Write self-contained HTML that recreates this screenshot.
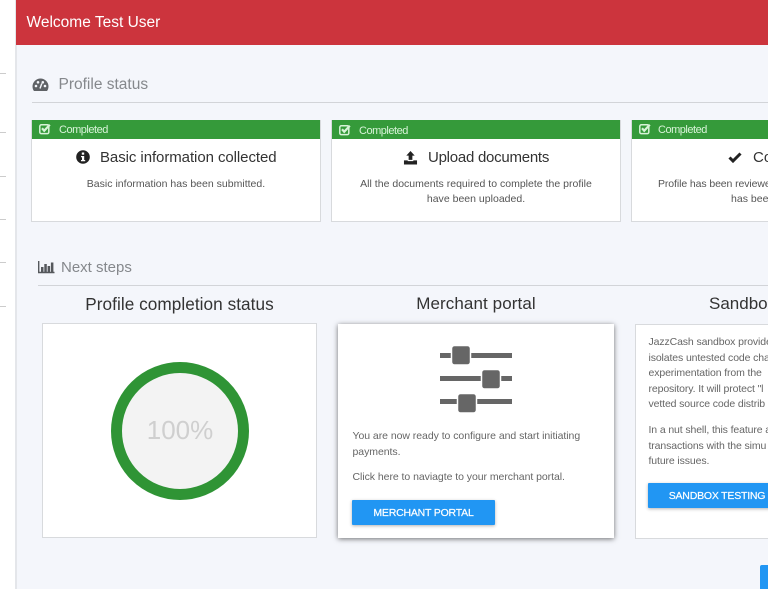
<!DOCTYPE html>
<html><head><meta charset="utf-8"><title>Welcome Test User</title>
<style>
html,body{margin:0;padding:0}
body{width:768px;height:589px;overflow:hidden;position:relative;background:#f4f6fb;font-family:"Liberation Sans",sans-serif}
.a{position:absolute;white-space:nowrap}
.c{text-align:center}
.box{position:absolute;background:#fff;box-sizing:border-box;border:1px solid #d8dadd}
.gr{position:absolute;background:#359a3a;height:19px}
.cmp{position:absolute;color:#d8f3d8;font-size:11px;line-height:19px;white-space:nowrap;letter-spacing:-.48px}
.h{color:#333;font-size:15px;line-height:20px}
.t{color:#555;font-size:10.5px;line-height:15px;letter-spacing:.01px}
.p{color:#666;font-size:10.5px;line-height:15.5px;letter-spacing:-.05px}
.btn{position:absolute;background:#2196f3;color:#fff;font-size:10.5px;text-align:center;border-radius:1px;box-shadow:0 1px 3px rgba(0,0,0,.3);letter-spacing:-.2px;-webkit-text-stroke:.2px #fff}
.sv{stroke:#d8f3d8;fill:none}
</style></head><body>
<div class="a" style="left:0;top:0;width:15px;height:589px;background:#fff"></div>
<div class="a" style="left:15px;top:0;width:2px;height:589px;background:#e4e6ea"></div>
<div class="a" style="left:0;top:73px;width:6px;height:1px;background:#ccc"></div>
<div class="a" style="left:0;top:132px;width:6px;height:1px;background:#ccc"></div>
<div class="a" style="left:0;top:176px;width:6px;height:1px;background:#ccc"></div>
<div class="a" style="left:0;top:219px;width:6px;height:1px;background:#ccc"></div>
<div class="a" style="left:0;top:262px;width:6px;height:1px;background:#ccc"></div>
<div class="a" style="left:0;top:306px;width:6px;height:1px;background:#ccc"></div>

<div class="a" style="left:16px;top:0;width:752px;height:44.5px;background:#cc343d"></div>
<div class="a" style="left:26.500px;top:12.500px;color:#fff;font-size:15.5px;line-height:20px">Welcome Test User</div>

<svg class="a" style="left:32px;top:78px" width="17" height="14" viewBox="0 0 17 14"><path d="M8.500 .5A8 8 0 0 0 .5 8.500c0 1.800.6 3.400 1.500 4.500h13c.9-1.100 1.500-2.700 1.500-4.500a8 8 0 0 0-8-8z" fill="#5f6266"/><circle cx="4" cy="8" r="1.300" fill="#f4f6fb"/><circle cx="6" cy="4.300" r="1.300" fill="#f4f6fb"/><circle cx="10.800" cy="4.300" r="1.300" fill="#f4f6fb"/><circle cx="13" cy="8" r="1.300" fill="#f4f6fb"/><path d="M9.800 5.500L8 10.500" stroke="#f4f6fb" stroke-width="1.400"/></svg>
<div class="a" style="left:58.500px;top:75px;color:#85888c;font-size:15.500px;line-height:20px">Profile status</div>
<div class="a" style="left:32px;top:102px;width:736px;height:1px;background:#d2d4d8"></div>

<div class="box" style="left:31px;top:120px;width:290px;height:102px"></div>
<div class="gr" style="left:32px;top:120px;width:288px"></div>
<svg class="a" style="left:39px;top:123px" width="12" height="12" viewBox="0 0 12 12"><rect class="sv" x=".8" y="1.800" width="9" height="8.800" rx="1.500" stroke-width="1.500"/><path class="sv" d="M3 5.300l2.200 2.400L10.800 1.800" stroke-width="2.200"/></svg>
<div class="cmp" style="left:59px;top:121px">Completed</div>
<svg class="a" style="left:76px;top:150px" width="14" height="14" viewBox="0 0 14 14"><circle cx="7" cy="7" r="6.800" fill="#222"/><rect x="5.800" y="2.500" width="2.400" height="2.200" fill="#fff"/><path d="M5 6h3.200v4H9.200v1.300H5V10h1V7.300H5z" fill="#fff"/></svg>
<div class="a h" style="left:100px;top:148px;letter-spacing:-.07px">Basic information collected</div>
<div class="a t c" style="left:32px;top:177px;width:288px">Basic information has been submitted.</div>

<div class="box" style="left:331px;top:120px;width:290px;height:102px"></div>
<div class="gr" style="left:332px;top:120px;width:288px"></div>
<svg class="a" style="left:339px;top:124px" width="12" height="12" viewBox="0 0 12 12"><rect class="sv" x=".8" y="1.800" width="9" height="8.800" rx="1.500" stroke-width="1.500"/><path class="sv" d="M3 5.300l2.200 2.400L10.800 1.800" stroke-width="2.200"/></svg>
<div class="cmp" style="left:359px;top:122px">Completed</div>
<svg class="a" style="left:403px;top:151px" width="15" height="14" viewBox="0 0 16 15"><path d="M8 0l4.500 5H10v4.500H6V5H3.500z" fill="#222"/><path d="M1 10h4v.8h6V10h4v4.500H1z" fill="#222"/></svg>
<div class="a h" style="left:428px;top:148px;letter-spacing:-.25px">Upload documents</div>
<div class="a t c" style="left:332px;top:177px;width:288px;">All the documents required to complete the profile<br>have been uploaded.</div>

<div class="box" style="left:631px;top:120px;width:160px;height:102px"></div>
<div class="gr" style="left:632px;top:120px;width:136px"></div>
<svg class="a" style="left:639px;top:123px" width="12" height="12" viewBox="0 0 12 12"><rect class="sv" x=".8" y="1.800" width="9" height="8.800" rx="1.500" stroke-width="1.500"/><path class="sv" d="M3 5.300l2.200 2.400L10.800 1.800" stroke-width="2.200"/></svg>
<div class="cmp" style="left:658px;top:121px">Completed</div>
<svg class="a" style="left:728px;top:152px" width="14" height="11" viewBox="0 0 14 11"><path d="M1.500 5.500L5 9l7.500-7.500" fill="none" stroke="#222" stroke-width="3"/></svg>
<div class="a h" style="left:753px;top:148px">Co</div>
<div class="a t" style="left:658px;top:177px;letter-spacing:-.1px">Profile has been reviewed</div>
<div class="a t" style="left:731px;top:192px">has been</div>

<svg class="a" style="left:38px;top:260px" width="17" height="14" viewBox="0 0 17 14"><path d="M.7 1v11.500h15.800" fill="none" stroke="#55585c" stroke-width="1.400"/><path d="M3 7h2.500v5H3zM6.300 4h2.500v8H6.300zM9.600 6h2.500v6H9.600zM12.900 2.500h2.500V12h-2.500z" fill="#55585c"/></svg>
<div class="a" style="left:61px;top:258px;color:#85888c;font-size:15px;line-height:20px">Next steps</div>
<div class="a" style="left:38px;top:285px;width:730px;height:1px;background:#d2d4d8"></div>

<div class="a c h" style="left:42px;top:294px;width:275px;font-size:17.200px;letter-spacing:.05px">Profile completion status</div>
<div class="box" style="left:42px;top:323px;width:275px;height:215px"></div>
<svg class="a" style="left:110px;top:361px" width="140" height="140" viewBox="0 0 140 140"><circle cx="70" cy="70" r="63.500" fill="#f3f3f3" stroke="#2f9435" stroke-width="11"/></svg>
<div class="a c" style="left:110px;top:415px;width:140px;color:#cfcfcf;font-size:26px;line-height:30px">100%</div>

<div class="a c h" style="left:338px;top:294px;width:276px;font-size:17px;letter-spacing:.1px">Merchant portal</div>
<div class="a" style="left:338px;top:324px;width:276px;height:214px;background:#fff;box-shadow:0 1px 5px rgba(0,0,0,.55)"></div>
<svg class="a" style="left:440px;top:346px" width="73" height="68" viewBox="0 0 73 68"><g fill="#666"><rect y="7" width="72" height="5"/><rect y="30" width="72" height="5"/><rect y="53" width="72" height="5"/></g><g fill="#666" stroke="#fff" stroke-width="1.500"><rect x="11.500" y="-.5" width="19" height="19.500" rx="3"/><rect x="41.500" y="23.500" width="19" height="19.500" rx="3"/><rect x="17.500" y="47.500" width="19" height="19.500" rx="3"/></g></svg>
<div class="a p" style="left:352.500px;top:429px">You are now ready to configure and start initiating<br>payments.</div>
<div class="a p" style="left:352.500px;top:470px">Click here to naviagte to your merchant portal.</div>
<div class="btn" style="left:352px;top:500px;width:143px;height:25px;line-height:26px">MERCHANT PORTAL</div>

<div class="a h" style="left:709px;top:294px;font-size:17px">Sandbox</div>
<div class="box" style="left:635px;top:324px;width:160px;height:215px"></div>
<div class="a p" style="left:648.500px;top:335px;letter-spacing:-.12px">JazzCash sandbox provides<br>isolates untested code cha<br>experimentation from the<br>repository. It will protect "l<br>vetted source code distrib</div>
<div class="a p" style="left:648.500px;top:423px;letter-spacing:-.12px">In a nut shell, this feature a<br>transactions with the simu<br>future issues.</div>
<div class="btn" style="left:648px;top:483px;width:143px;height:25px;line-height:26px;box-sizing:border-box;padding-right:5px">SANDBOX TESTING</div>
<div class="a" style="left:760px;top:565px;width:8px;height:24px;background:#2196f3;border-radius:2px 0 0 0"></div>
</body></html>
